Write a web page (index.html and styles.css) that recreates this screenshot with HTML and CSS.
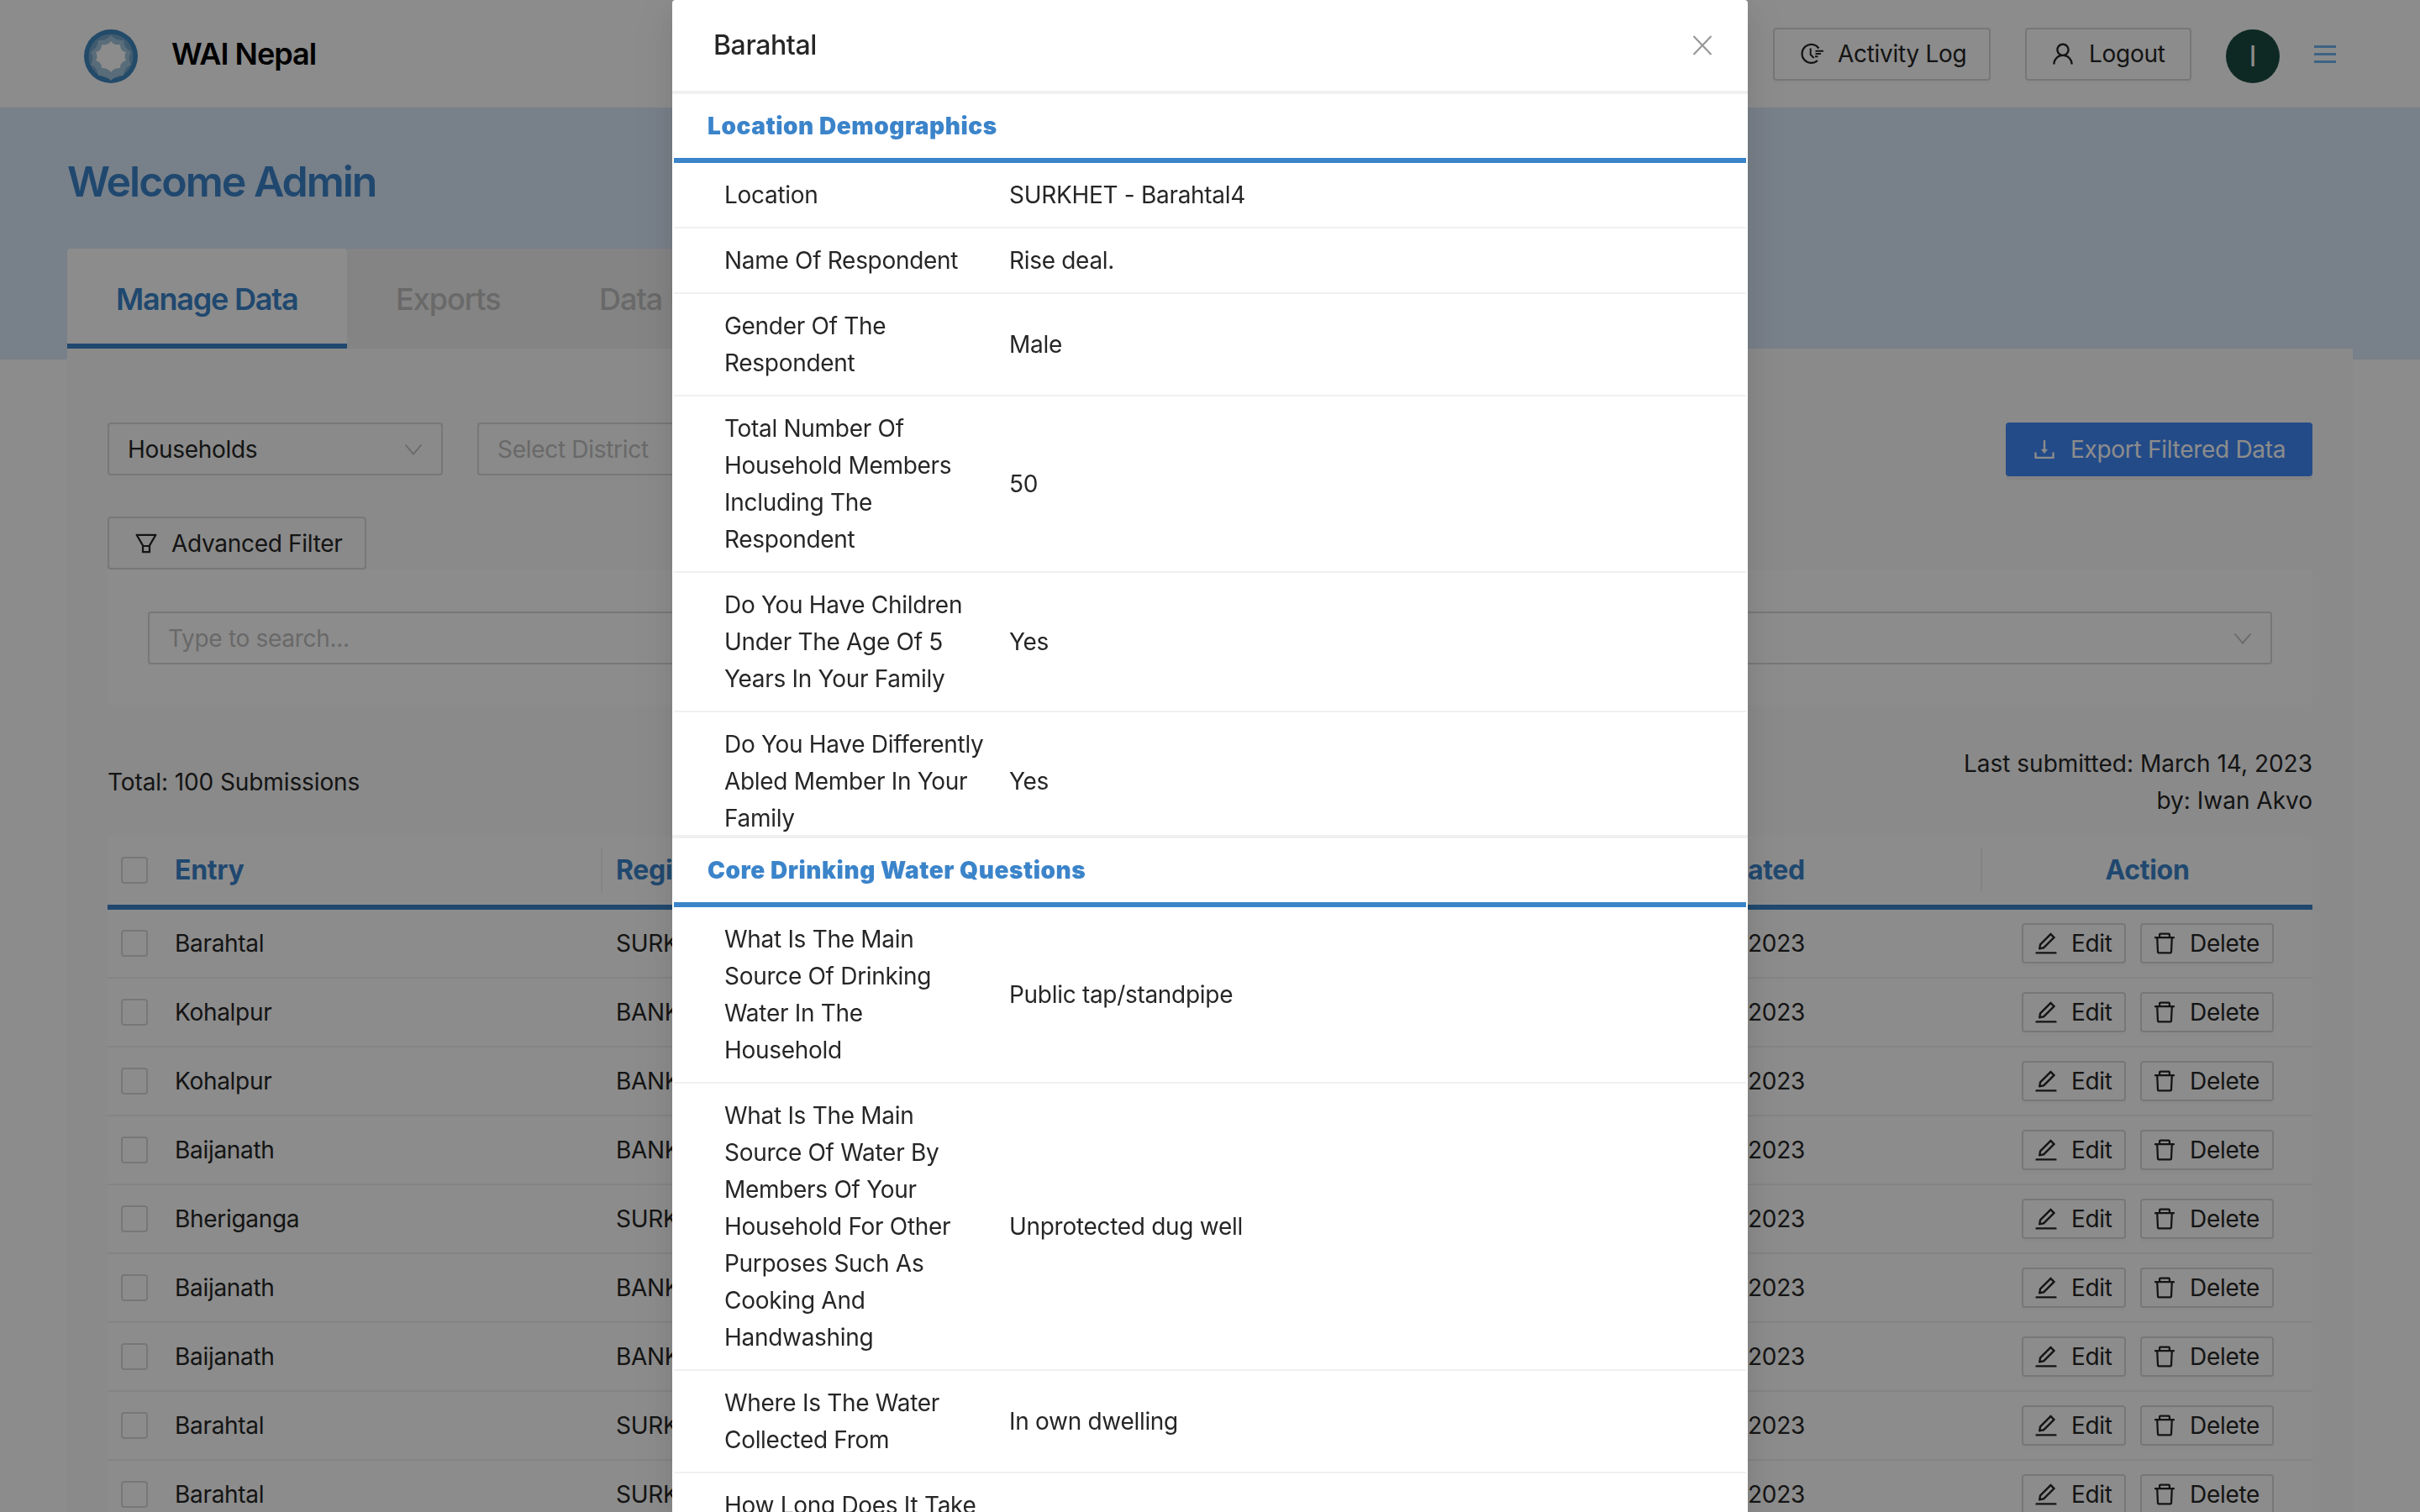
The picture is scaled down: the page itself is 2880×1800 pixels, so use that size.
FILE: index.html
```html
<!DOCTYPE html>
<html lang="en">
<head>
<meta charset="utf-8">
<title>WAI Nepal</title>
<link rel="stylesheet" href="styles.css">
</head>
<body>
<svg class="sprite" xmlns="http://www.w3.org/2000/svg">
<symbol id="i-user" viewBox="64 64 896 896"><path d="M858.5 763.6a374 374 0 0 0-80.6-119.5 375.63 375.63 0 0 0-119.5-80.6c-.4-.2-.8-.3-1.2-.5C719.5 518 760 444.7 760 362c0-137-111-248-248-248S264 225 264 362c0 82.7 40.5 156 102.8 201.1-.4.2-.8.3-1.2.5-44.8 18.9-85 46-119.5 80.6a375.63 375.63 0 0 0-80.6 119.5A371.7 371.7 0 0 0 136 901.8a8 8 0 0 0 8 8.2h60c4.4 0 7.9-3.5 8-7.8 2-77.2 33-149.5 87.8-204.3 56.7-56.7 132-87.9 212.2-87.9s155.5 31.2 212.2 87.9C779 752.7 810 825 812 902.2c.1 4.4 3.6 7.8 8 7.8h60a8 8 0 0 0 8-8.2c-1-47.8-10.9-94.3-29.5-138.2zM512 534c-45.9 0-89.1-17.9-121.6-50.4S340 407.9 340 362c0-45.9 17.9-89.1 50.4-121.6S466.1 190 512 190s89.1 17.9 121.6 50.4S684 316.1 684 362c0 45.9-17.9 89.1-50.4 121.6S557.9 534 512 534z"/></symbol>
<symbol id="i-edit" viewBox="64 64 896 896"><path d="M257.7 752c2 0 4-.2 6-.5L431.9 722c2-.4 3.9-1.3 5.3-2.8l423.9-423.9a9.96 9.96 0 0 0 0-14.1L694.9 114.9c-1.9-1.9-4.4-2.9-7.1-2.9s-5.2 1-7.1 2.9L256.8 538.8c-1.5 1.5-2.4 3.3-2.8 5.3l-29.5 168.2a33.5 33.5 0 0 0 9.4 29.8c6.6 6.4 14.9 9.9 23.8 9.9zm67.4-174.4L687.8 215l73.3 73.3-362.7 362.6-88.9 15.7 15.6-89zM880 836H144c-17.7 0-32 14.3-32 32v36c0 4.4 3.6 8 8 8h784c4.4 0 8-3.6 8-8v-36c0-17.7-14.3-32-32-32z"/></symbol>
<symbol id="i-delete" viewBox="64 64 896 896"><path d="M360 184h-8c4.4 0 8-3.6 8-8v8h304v-8c0 4.4 3.6 8 8 8h-8v72h72v-80c0-35.3-28.7-64-64-64H352c-35.3 0-64 28.7-64 64v80h72v-72zm504 72H160c-17.7 0-32 14.3-32 32v32c0 4.4 3.6 8 8 8h60.4l24.7 523c1.6 34.1 29.8 61 63.9 61h454c34.2 0 62.3-26.8 63.9-61l24.7-523H888c4.4 0 8-3.6 8-8v-32c0-17.7-14.3-32-32-32zM731.3 840H292.7l-24.2-512h487l-24.2 512z"/></symbol>
<symbol id="i-filter" viewBox="64 64 896 896"><path d="M880.1 154H143.9c-24.5 0-39.8 26.7-27.5 48L349 597.4V838c0 17.7 14.2 32 31.8 32h262.4c17.6 0 31.8-14.3 31.8-32V597.4L907.7 202c12.2-21.3-3.1-48-27.6-48zM603.4 798H420.6V642h182.9v156zm9.6-236.6l-9.5 16.6h-183l-9.5-16.6L212.7 226h598.6L613 561.4z"/></symbol>
<symbol id="i-download" viewBox="64 64 896 896"><path d="M505.7 661a8 8 0 0 0 12.6 0l112-141.7c4.1-5.2.4-12.9-6.3-12.9h-74.1V168c0-4.4-3.6-8-8-8h-60c-4.4 0-8 3.6-8 8v338.3H400c-6.7 0-10.4 7.7-6.3 12.9l112 141.8zM878 626h-60c-4.4 0-8 3.6-8 8v154H214V634c0-4.4-3.6-8-8-8h-60c-4.4 0-8 3.6-8 8v198c0 17.7 14.3 32 32 32h684c17.7 0 32-14.3 32-32V634c0-4.4-3.6-8-8-8z"/></symbol>
<symbol id="i-down" viewBox="0 0 22 14"><path d="M1.5 1.5L11 12.5 20.5 1.5" fill="none" stroke="currentColor" stroke-width="1.8"/></symbol>
<symbol id="i-close" viewBox="0 0 24 24"><path d="M1.5 1L22.5 23M22.5 1L1.5 23" fill="none" stroke="currentColor" stroke-width="2.2"/></symbol>
<symbol id="i-log" viewBox="0 0 28 28"><path d="M22.5 7.5A11 11 0 1 0 21 22" fill="none" stroke="currentColor" stroke-width="2.2"/><path d="M12.7 7.5V15l4 4" fill="none" stroke="currentColor" stroke-width="2"/><path d="M18.5 10.7H28M18.5 14H25M18 17.3h3.5" fill="none" stroke="currentColor" stroke-width="2"/></symbol>
</svg>

<header class="topbar">
  <div class="brand">
    <svg class="logo" viewBox="0 0 64 64">
      <circle cx="32" cy="32" r="32" fill="#3f87c0"/>
      <circle cx="32" cy="32" r="26.5" fill="#76a6ca"/>
      <path d="M32 7c5 5 8 6 15 6 1 7 3 10 9 14-3 6-3 9 0 15-6 3-8 6-9 13-7 0-10 1-15 6-5-5-8-6-15-6-1-7-3-10-9-13 3-6 3-9 0-15 6-4 8-7 9-14 7 0 10-1 15-6z" fill="#a3c5dd"/>
      <path d="M32 14c3 4 6 5 11 4 0 5 2 8 7 9-2 4-2 7 0 10-5 2-7 4-7 9-5 0-8 1-11 5-3-4-6-5-11-5 0-5-2-7-7-9 2-3 2-6 0-10 5-1 7-4 7-9 5 1 8 0 11-4z" fill="#fff"/>
    </svg>
    <span class="brand-name">WAI Nepal</span>
  </div>
  <div class="top-actions">
    <button class="btn btn-top btn-log"><svg class="ico"><use href="#i-log"/></svg>Activity Log</button>
    <button class="btn btn-top btn-logout"><svg class="ico"><use href="#i-user"/></svg>Logout</button>
    <div class="avatar">I</div>
    <div class="burger"><span></span><span></span><span></span></div>
  </div>
</header>

<section class="banner">
  <h1 class="welcome">Welcome Admin</h1>
  <nav class="tabs">
    <div class="tab tab-active">Manage Data</div>
    <div class="tab tab-exports">Exports</div>
    <div class="tab">Data Uploads</div>
    <div class="tab">User Management</div>
  </nav>
</section>

<main class="card">
  <div class="filters">
    <div class="select select-form"><span>Households</span><svg class="caret"><use href="#i-down"/></svg></div>
    <div class="select select-district"><span class="muted">Select District</span><svg class="caret"><use href="#i-down"/></svg></div>
    <button class="btn btn-primary"><svg class="ico"><use href="#i-download"/></svg>Export Filtered Data</button>
  </div>
  <button class="btn btn-filter"><svg class="ico"><use href="#i-filter"/></svg>Advanced Filter</button>
  <div class="filter-panel">
    <div class="select select-search"><span class="muted">Type to search...</span><svg class="caret"><use href="#i-down"/></svg></div>
  </div>
  <div class="summary">
    <div class="total">Total: 100 Submissions</div>
    <div class="last">Last submitted: March 14, 2023<br>by: Iwan Akvo</div>
  </div>
  <div class="table">
    <div class="row row-head">
      <div class="cell-check"><span class="check"></span></div>
      <div class="cell th">Entry</div>
      <div class="cell th sep">Region</div>
      <div class="cell th date">Date Created</div>
      <div class="cell th sep action-head">Action</div>
    </div>
    <div class="row"><div class="cell-check"><span class="check"></span></div><div class="cell">Barahtal</div><div class="cell reg">SURKHET</div><div class="cell date">March 14, 2023</div><div class="cell actions"><button class="btn btn-sm btn-edit"><svg class="ico"><use href="#i-edit"/></svg>Edit</button><button class="btn btn-sm btn-del"><svg class="ico"><use href="#i-delete"/></svg>Delete</button></div></div>
    <div class="row"><div class="cell-check"><span class="check"></span></div><div class="cell">Kohalpur</div><div class="cell reg">BANKE</div><div class="cell date">March 14, 2023</div><div class="cell actions"><button class="btn btn-sm btn-edit"><svg class="ico"><use href="#i-edit"/></svg>Edit</button><button class="btn btn-sm btn-del"><svg class="ico"><use href="#i-delete"/></svg>Delete</button></div></div>
    <div class="row"><div class="cell-check"><span class="check"></span></div><div class="cell">Kohalpur</div><div class="cell reg">BANKE</div><div class="cell date">March 14, 2023</div><div class="cell actions"><button class="btn btn-sm btn-edit"><svg class="ico"><use href="#i-edit"/></svg>Edit</button><button class="btn btn-sm btn-del"><svg class="ico"><use href="#i-delete"/></svg>Delete</button></div></div>
    <div class="row"><div class="cell-check"><span class="check"></span></div><div class="cell">Baijanath</div><div class="cell reg">BANKE</div><div class="cell date">March 14, 2023</div><div class="cell actions"><button class="btn btn-sm btn-edit"><svg class="ico"><use href="#i-edit"/></svg>Edit</button><button class="btn btn-sm btn-del"><svg class="ico"><use href="#i-delete"/></svg>Delete</button></div></div>
    <div class="row"><div class="cell-check"><span class="check"></span></div><div class="cell">Bheriganga</div><div class="cell reg">SURKHET</div><div class="cell date">March 14, 2023</div><div class="cell actions"><button class="btn btn-sm btn-edit"><svg class="ico"><use href="#i-edit"/></svg>Edit</button><button class="btn btn-sm btn-del"><svg class="ico"><use href="#i-delete"/></svg>Delete</button></div></div>
    <div class="row"><div class="cell-check"><span class="check"></span></div><div class="cell">Baijanath</div><div class="cell reg">BANKE</div><div class="cell date">March 14, 2023</div><div class="cell actions"><button class="btn btn-sm btn-edit"><svg class="ico"><use href="#i-edit"/></svg>Edit</button><button class="btn btn-sm btn-del"><svg class="ico"><use href="#i-delete"/></svg>Delete</button></div></div>
    <div class="row"><div class="cell-check"><span class="check"></span></div><div class="cell">Baijanath</div><div class="cell reg">BANKE</div><div class="cell date">March 14, 2023</div><div class="cell actions"><button class="btn btn-sm btn-edit"><svg class="ico"><use href="#i-edit"/></svg>Edit</button><button class="btn btn-sm btn-del"><svg class="ico"><use href="#i-delete"/></svg>Delete</button></div></div>
    <div class="row"><div class="cell-check"><span class="check"></span></div><div class="cell">Barahtal</div><div class="cell reg">SURKHET</div><div class="cell date">March 14, 2023</div><div class="cell actions"><button class="btn btn-sm btn-edit"><svg class="ico"><use href="#i-edit"/></svg>Edit</button><button class="btn btn-sm btn-del"><svg class="ico"><use href="#i-delete"/></svg>Delete</button></div></div>
    <div class="row"><div class="cell-check"><span class="check"></span></div><div class="cell">Barahtal</div><div class="cell reg">SURKHET</div><div class="cell date">March 14, 2023</div><div class="cell actions"><button class="btn btn-sm btn-edit"><svg class="ico"><use href="#i-edit"/></svg>Edit</button><button class="btn btn-sm btn-del"><svg class="ico"><use href="#i-delete"/></svg>Delete</button></div></div>
  </div>
</main>

<div class="overlay"></div>

<aside class="modal">
  <div class="modal-head">
    <span class="modal-title">Barahtal</span>
    <svg class="modal-close"><use href="#i-close"/></svg>
  </div>
  <section class="group group-first">
    <h2 class="group-title">Location Demographics</h2>
    <div class="group-rows">
      <div class="qa"><div class="q">Location</div><div class="a">SURKHET - Barahtal4</div></div>
      <div class="qa"><div class="q">Name Of Respondent</div><div class="a">Rise deal.</div></div>
      <div class="qa"><div class="q">Gender Of The Respondent</div><div class="a">Male</div></div>
      <div class="qa"><div class="q">Total Number Of Household Members Including The Respondent</div><div class="a">50</div></div>
      <div class="qa"><div class="q">Do You Have Children Under The Age Of 5 Years In Your Family</div><div class="a">Yes</div></div>
      <div class="qa"><div class="q">Do You Have Differently Abled Member In Your Family</div><div class="a">Yes</div></div>
    </div>
  </section>
  <section class="group">
    <h2 class="group-title">Core Drinking Water Questions</h2>
    <div class="group-rows">
      <div class="qa"><div class="q">What Is The Main Source Of Drinking Water In The Household</div><div class="a">Public tap/standpipe</div></div>
      <div class="qa"><div class="q">What Is The Main Source Of Water By Members Of Your Household For Other Purposes Such As Cooking And Handwashing</div><div class="a">Unprotected dug well</div></div>
      <div class="qa"><div class="q">Where Is The Water Collected From</div><div class="a">In own dwelling</div></div>
      <div class="qa"><div class="q">How Long Does It Take To Collect Water</div><div class="a">Less than 30 minutes</div></div>
    </div>
  </section>
</aside>
</body>
</html>
```
FILE: styles.css
```css
* { box-sizing: border-box; }
html, body { margin: 0; height: 1800px; overflow: hidden; background: #fff; }
body { font-family: Inter, "Liberation Sans", sans-serif; font-size: 28px; line-height: 44px; letter-spacing: -0.3px; color: #262626; }
.sprite { display: none; }
.ico { width: 28px; height: 28px; fill: currentColor; flex: none; }

.btn { display: inline-flex; align-items: center; justify-content: flex-start; gap: 17px; padding: 0 0 0 30px; font: inherit; letter-spacing: inherit; color: #262626; background: #fff; border: 2px solid #d9d9d9; border-radius: 4px; box-shadow: 0 4px 0 rgba(0,0,0,.015); }

.topbar { height: 128px; display: flex; justify-content: space-between; padding: 0 100px; background: #fff; }
.brand { height: 128px; display: flex; align-items: center; gap: 40px; }
.logo { width: 64px; height: 64px; margin-top: 5px; }
.brand-name { font-size: 36px; font-weight: 600; letter-spacing: -1px; color: #000; }
.top-actions { height: 128px; display: flex; align-items: center; }
.btn-top { height: 63px; }
.btn-log { width: 259px; margin-right: 41px; }
.btn-logout { width: 198px; margin-right: 41px; padding-left: 29px; }
.avatar { width: 64px; height: 64px; margin: 5px 41px 0 0; border-radius: 50%; background: #1b4c41; color: #fff; display: flex; align-items: center; justify-content: center; font-size: 34px; font-weight: 400; }
.burger { width: 26px; display: flex; flex-direction: column; gap: 6px; }
.burger span { height: 3px; background: #6fb5f0; }

.banner { height: 300px; background: #dbe9fa; padding: 0 80px; }
.welcome { margin: 0; padding-top: 58px; height: 168px; font-size: 50px; line-height: 60px; font-weight: 600; letter-spacing: -2px; color: #3b84ca; }
.tabs { display: flex; height: 119px; }
.tab { padding: 0 58px; display: flex; align-items: center; background: #f0f0f0; font-size: 36px; font-weight: 500; letter-spacing: -1px; color: #bfbfbf; white-space: nowrap; }
.tab-active { width: 333px; background: #fff; color: #3b84ca; font-weight: 600; letter-spacing: -1.2px; border-bottom: 6px solid #3b84ca; padding-top: 6px; border-radius: 4px 4px 0 0; }
.tab-exports { width: 242px; }

.card { width: 2720px; margin: -13px 0 0 80px; background: #fbfbfb; padding: 88px 48px 0; position: relative; }
.filters { display: flex; align-items: flex-start; gap: 41px; height: 64px; }
.select { display: flex; align-items: center; justify-content: space-between; height: 63px; border: 2px solid #d9d9d9; border-radius: 4px; padding: 0 22px; background: #fbfbfb; }
.select-form { width: 399px; }
.select-district { width: 400px; margin-right: auto; }
.caret { width: 22px; height: 14px; color: #bfbfbf; flex: none; }
.muted { color: #bfbfbf; }
.btn-primary { width: 365px; height: 64px; background: #4189f8; border-color: #4189f8; color: #fff; box-shadow: 0 4px 0 rgba(0,0,0,.045); }
.btn-filter { display: flex; width: 308px; height: 63px; gap: 16px; margin-top: 48px; background: #fbfbfb; }
.filter-panel { background: #fff; padding: 50px 48px 48px; height: 161px; border-radius: 0 0 6px 6px; }
.select-search { background: #fff; }
.summary { display: flex; align-items: center; justify-content: space-between; height: 156px; padding-top: 28px; }
.total { letter-spacing: -0.1px; }
.last { text-align: right; letter-spacing: 0; }
.table { background: #fff; border-radius: 6px 6px 0 0; }
.row { display: grid; grid-template-columns: 80px 507px 1000px 642px 395px; align-items: center; height: 82px; border-bottom: 2px solid #f0f0f0; }
.row-head { height: 88px; border-bottom: 6px solid #3b84ca; font-weight: 700; color: #3b84ca; font-size: 32px; border-radius: 6px 6px 0 0; }
.cell-check { padding-left: 16px; display: flex; }
.check { width: 32px; height: 32px; border: 2px solid #d9d9d9; border-radius: 4px; background: #fff; }
.cell { white-space: nowrap; }
.reg { padding-left: 18px; }
.th { height: 44px; }
.sep { border-left: 2px solid #f0f0f0; padding-left: 16px; height: 52px; line-height: 52px; }
.date { text-align: right; padding-right: 209px; }
.action-head { text-align: center; padding-left: 0; }
.actions { display: flex; gap: 17px; padding-left: 49px; }
.btn-sm { height: 48px; padding-left: 13px; gap: 16px; }
.btn-edit { width: 124px; }
.btn-del { width: 159px; }

.overlay { position: fixed; inset: 0; background: rgba(0,0,0,.45); }
.modal { position: fixed; left: 800px; top: 0; width: 1280px; height: 1800px; background: #fff; border-radius: 4px 4px 0 0; display: flex; flex-direction: column; padding: 0 2px; box-shadow: 0 12px 32px rgba(0,0,0,.08), 0 6px 12px -8px rgba(0,0,0,.12), 0 18px 56px 16px rgba(0,0,0,.05); overflow: hidden; }
.modal-head { height: 112px; flex: none; display: flex; align-items: center; justify-content: space-between; padding: 0 42px 0 49px; border-bottom: 4px solid #f0f0f0; margin: 0 -2px; }
.modal-title { font-size: 32px; font-weight: 500; letter-spacing: -0.4px; }
.modal-close { width: 24px; height: 24px; color: #999; }
.group { display: flex; flex-direction: column; min-height: 0; flex: 1; }
.group-first { flex: none; height: 886px; border-bottom: 4px solid #f0f0f0; margin: 0 -2px; padding: 0 2px; }
.group-title { flex: none; margin: 0; height: 82px; padding: 16px 0 0 40px; font-size: 28px; line-height: 44px; font-weight: 900; letter-spacing: .55px; color: #3b84ca; border-bottom: 6px solid #3b84ca; }
.group-rows { flex: 1; min-height: 0; overflow: hidden; }
.qa { display: grid; grid-template-columns: 399px 1fr; align-items: center; border-bottom: 2px solid #f0f0f0; }
.q { padding: 16px 28px 16px 60px; }
.a { padding: 16px 24px 16px 0; }
```
